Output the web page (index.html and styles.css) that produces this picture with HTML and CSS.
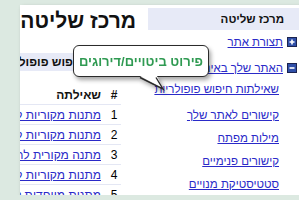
FILE: index.html
```html
<!DOCTYPE html>
<html lang="he" dir="rtl">
<head>
    <meta charset="UTF-8">
    <meta name="viewport" content="width=device-width, initial-scale=1.0">
    <title>מרכז שליטה</title>
    <link rel="stylesheet" href="styles.css">
</head>
<body>
    <div class="panel">
        <!-- תפריט צד -->
        <div class="sidebar">
            <div class="side-head">מרכז שליטה</div>
            <ul class="menu">
                <li class="menu-item">
                    <svg class="toggle" width="10" height="10" viewBox="0 0 10 10">
                        <rect x="0.5" y="0.5" width="9" height="9" fill="#2f4fa8" stroke="#1b2450"/>
                        <path d="M2.5 5h5M5 2.5v5" stroke="#fff" stroke-width="1.6"/>
                    </svg>
                    <a href="#">תצורת אתר</a>
                </li>
                <li class="menu-item">
                    <svg class="toggle" width="10" height="10" viewBox="0 0 10 10">
                        <rect x="0.5" y="0.5" width="9" height="9" fill="#2f4fa8" stroke="#1b2450"/>
                        <path d="M2.5 5h5" stroke="#fff" stroke-width="1.6"/>
                    </svg>
                    <a href="#">האתר שלך באינטרנט</a>
                </li>
            </ul>
            <ul class="submenu">
                <li><a href="#">שאילתות חיפוש פופולריות</a></li>
                <li><a href="#">קישורים לאתר שלך</a></li>
                <li><a href="#">מילות מפתח</a></li>
                <li><a href="#">קישורים פנימיים</a></li>
                <li><a href="#">סטטיסטיקת מנויים</a></li>
            </ul>
        </div>

        <!-- תוכן ראשי -->
        <div class="main">
            <h1>מרכז שליטה</h1>
            <div class="report">
                <div class="report-title">שאילתות חיפוש פופולריות</div>
                <table class="queries">
                    <colgroup><col class="col-num"><col></colgroup>
                    <tr><th class="num">#</th><th class="query">שאילתה</th></tr>
                    <tr><td class="num">1</td><td class="query"><a href="#">מתנות מקוריות לחג</a></td></tr>
                    <tr><td class="num">2</td><td class="query"><a href="#">מתנות מקוריות לגבר</a></td></tr>
                    <tr><td class="num">3</td><td class="query"><a href="#">מתנה מקורית לחג</a></td></tr>
                    <tr><td class="num">4</td><td class="query"><a href="#">מתנות מקוריות ליום נישואין</a></td></tr>
                    <tr><td class="num">5</td><td class="query"><a href="#">מתנות מיוחדות לחג</a></td></tr>
                </table>
            </div>
        </div>

        <!-- בועת הסבר -->
        <div class="callout">
            <span>פירוט ביטויים/דירוגים</span>
            <svg class="tail" width="34" height="18" viewBox="0 0 34 18">
                <polygon points="3,0 26,13 20,0" fill="#fff"/>
                <polyline points="3,1.5 26,13 19,1.5" fill="none" stroke="#2b2b2b" stroke-width="1.4"/>
            </svg>
        </div>
    </div>
</body>
</html>
```

FILE: styles.css
```css
body {
    margin: 0;
    padding: 5px 0 0 9px;
    background-color: #dce9e1;
    font-family: "Liberation Sans", "DejaVu Sans", Arial, sans-serif;
    direction: rtl;
}
.panel {
    position: relative;
    display: flex;
    width: 279px;
    height: 190px;
    background: white;
    box-shadow: 2px 2px 4px rgba(0, 0, 0, 0.3);
    overflow: hidden;
}
a {
    color: #2a2ac8;
    text-decoration: underline;
    white-space: nowrap;
}

/* sidebar */
.sidebar {
    flex: none;
    width: 151px;
    padding-top: 3px;
}
.side-head {
    background: #e7eaf7;
    height: 22px;
    line-height: 22px;
    padding-right: 15px;
    font-size: 11.5px;
    font-weight: bold;
    color: #111;
}
.menu,
.submenu {
    list-style: none;
    margin: 0;
    padding: 0;
    font-size: 11.5px;
}
.menu {
    padding-top: 4px;
}
.menu-item {
    display: flex;
    align-items: center;
    gap: 4px;
    height: 16px;
    padding-right: 2px;
    margin-bottom: 10px;
}
.toggle {
    flex: none;
}
.submenu {
    padding-right: 20px;
    margin-top: -5px;
}
.submenu li {
    height: 16px;
    line-height: 16px;
    margin-bottom: 7px;
}
.submenu li:first-child {
    margin-bottom: 10px;
}

/* main column */
.main {
    flex: none;
    width: 128px;
}
.main h1 {
    margin: 4px 12px 0 0;
    font-size: 21px;
    line-height: 24px;
    font-weight: bold;
    color: #111;
    white-space: nowrap;
}
.report {
    margin: 20px 0 0 -80px;
}
.report-title {
    background: #e7eaf7;
    height: 18px;
    line-height: 18px;
    padding-right: 11px;
    font-size: 12px;
    font-weight: bold;
    color: #111;
    white-space: nowrap;
}
.queries {
    width: 181px;
    margin: 14px 27px 0 0;
    border-collapse: collapse;
    table-layout: fixed;
    font-size: 12px;
}
.col-num {
    width: 14px;
}
.queries th,
.queries td {
    height: 19px;
    padding: 0;
    border-bottom: 1px solid #e4e7f4;
    white-space: nowrap;
    overflow: hidden;
}
.queries th {
    font-weight: bold;
    color: #111;
}
.queries .num {
    text-align: center;
}
.queries .query {
    text-align: right;
    padding-right: 6px;
}

/* callout bubble */
.callout {
    position: absolute;
    left: 53px;
    top: 40px;
    width: 134px;
    height: 30px;
    border: 1.5px solid #2b2b2b;
    border-radius: 6px;
    background: white;
    filter: drop-shadow(2px 3px 2px rgba(0, 0, 0, 0.35));
    display: flex;
    align-items: center;
    justify-content: center;
    font-size: 13px;
    font-weight: bold;
    color: #2f9a52;
    white-space: nowrap;
}
.tail {
    position: absolute;
    left: 63px;
    top: 29.5px;
}
```
